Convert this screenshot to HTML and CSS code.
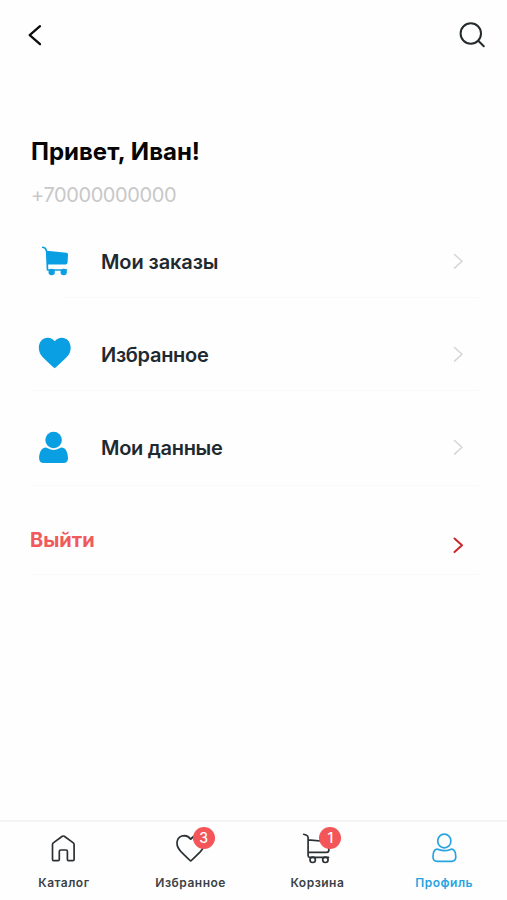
FILE: index.html
```html
<!DOCTYPE html>
<html lang="ru">
<head>
<meta charset="utf-8">
<meta name="viewport" content="width=device-width, initial-scale=1">
<title>Профиль</title>
<link rel="stylesheet" href="styles.css">
</head>
<body>
<div class="app">
  <header class="topbar">
    <svg class="topbar-icon" viewBox="0 0 30 30"><path d="M20 6.200 9.700 15.200l10.300 9"/></svg>
    <svg class="topbar-icon search" viewBox="0 0 30 30"><circle cx="13.800" cy="13.500" r="10.200"/><path d="m21.300 20.700 5.500 5.500"/></svg>
  </header>
  <main class="content">
    <h1 class="greeting">Привет, Иван!</h1>
    <p class="phone">+70000000000</p>
    <nav class="menu">
      <a class="row row-orders">
        <svg class="row-icon" viewBox="0 0 36 36"><path d="M6.800 4.300 9.300 5.200 10.700 8.500 11.500 27h19" fill="none" stroke="#0a9fe3" stroke-width="1.700" stroke-linecap="round" stroke-linejoin="round"/><path d="M10.600 7.800 30.500 9.700Q32 10 32 11.500L31.500 19.500Q31.300 21.400 29.500 21.400H11.300Z"/><circle cx="15.700" cy="29" r="3.200"/><circle cx="27.700" cy="29" r="3.200"/></svg>
        <span class="row-label">Мои заказы</span>
        <svg class="chevron" viewBox="0 0 16 20"><path d="m4.500 3.500 7.500 6.800-7.500 6.800"/></svg>
      </a>
      <a class="row row-favorites">
        <svg class="row-icon" viewBox="0 0 36 36"><path d="M18.700 32.300Q17.600 31.800 7 21.500C-.2 14.400 2.200 1.800 12 1.700Q16 1.800 18.700 5.300 21.600 1.800 25.800 1.700C35 1.900 37.700 14.100 30.800 21.100Q19.900 31.700 18.700 32.300Z"/></svg>
        <span class="row-label">Избранное</span>
        <svg class="chevron" viewBox="0 0 16 20"><path d="m4.500 3.500 7.500 6.800-7.500 6.800"/></svg>
      </a>
      <a class="row row-data">
        <svg class="row-icon" viewBox="0 0 36 36"><circle cx="17.600" cy="11" r="8.300"/><path d="M8.500 18.700Q10.100 18.300 11.700 19.200 17.600 22.800 23.500 19.200 25.100 18.300 26.800 18.700C30.400 19.500 32 24.700 32 29.300Q32 34 27.500 34H7.700Q3.100 34 3.100 29.300C3.100 24.600 4.900 19.600 8.500 18.700Z"/></svg>
        <span class="row-label">Мои данные</span>
        <svg class="chevron" viewBox="0 0 16 20"><path d="m4.500 3.500 7.500 6.800-7.500 6.800"/></svg>
      </a>
      <a class="row row-logout">
        <span class="row-label">Выйти</span>
        <svg class="chevron" viewBox="0 0 16 20"><path d="m4.500 3.500 7.500 6.800-7.500 6.800"/></svg>
      </a>
    </nav>
  </main>
  <nav class="tabbar">
    <a class="tab">
      <span class="tab-icon"><svg viewBox="0 0 32 32"><path d="M5.500 12.500Q5.500 11.500 6.300 10.900L15.300 4.300Q16.300 3.700 17.300 4.300L26.300 10.900Q27.100 11.500 27.100 12.500V27.500Q27.100 28.700 25.900 28.700H21.600Q20.400 28.700 20.400 27.500V19.400Q20.400 18 19 18H13.700Q12.300 18 12.300 19.400V27.500Q12.300 28.700 11.100 28.700H6.700Q5.500 28.700 5.500 27.500Z"/></svg></span>
      <span class="tab-label">Каталог</span>
    </a>
    <a class="tab">
      <span class="tab-icon"><svg viewBox="0 0 32 32"><path d="M16.700 29Q15.600 28.300 7.200 19.900C.2 12.500 2.500 4 10.500 3.700Q14.300 3.900 16.700 7.200 19.200 3.900 23 3.700C31 4 33.200 12.500 26.200 19.900Q17.800 28.300 16.700 29Z"/></svg><b class="badge">3</b></span>
      <span class="tab-label">Избранное</span>
    </a>
    <a class="tab">
      <span class="tab-icon"><svg viewBox="0 0 32 32"><path d="M2.700 2.300 5.600 3.200Q7 3.800 7.100 5.500V23.700Q7.200 25.300 8.800 25.300H27.500M7.200 7.800 25.200 9.500Q27.800 9.800 27.800 12V18.300Q27.800 20.300 25.800 20.300H7.200"/><circle cx="11.700" cy="27.800" r="2.700"/><circle cx="24.400" cy="27.800" r="2.700"/></svg><b class="badge">1</b></span>
      <span class="tab-label">Корзина</span>
    </a>
    <a class="tab active">
      <span class="tab-icon"><svg viewBox="0 0 32 32"><rect x="9.800" y="2.200" width="13" height="13.600" rx="6.400"/><path d="M9 17.200C10.500 17.100 12 18.700 16.400 18.700S22.100 17.100 23.700 17.200C26.500 17.500 27.800 21.500 27.800 25.100Q27.800 29.300 23.600 29.300H9.200Q5 29.300 5 25.100C5 21.500 6.200 17.500 9 17.200Z"/></svg></span>
      <span class="tab-label">Профиль</span>
    </a>
  </nav>
</div>
</body>
</html>
```

FILE: styles.css
```css
* { box-sizing: border-box; }

body {
  margin: 0;
  background: #fefefe;
  color: #1f2a30;
  font-family: Inter, "Liberation Sans", sans-serif;
}

.app {
  height: 900px;
  display: flex;
  flex-direction: column;
}

.topbar {
  height: 70px;
  padding: 20px 20px 0;
  display: flex;
  justify-content: space-between;
}

.topbar-icon {
  width: 30px;
  height: 30px;
  fill: none;
  stroke: #0d0d0d;
  stroke-width: 2.3;
  stroke-linecap: round;
  stroke-linejoin: round;
}

.search {
  stroke: #252a2d;
  stroke-width: 2;
}

.content {
  flex: 1;
  padding: 67px 29px 0 30px;
}

.greeting {
  margin: 0 0 0 1px;
  font-size: 24px;
  line-height: 30px;
  font-weight: 700;
  color: #050505;
  white-space: nowrap;
}

.phone {
  margin: 13px 0 0 1px;
  font-size: 20px;
  line-height: 30px;
  letter-spacing: -0.4px;
  color: #c8c8c8;
}

.menu {
  margin-top: 15px;
}

.row {
  display: flex;
  align-items: flex-start;
  border-bottom: 1px solid #f9f9f9;
}

.row-orders {
  height: 73px;
  padding-top: 18px;
  border-image: linear-gradient(90deg, transparent 35px, #f9f9f9 35px) 1;
}

.row-favorites {
  height: 93px;
  padding-top: 38px;
}

.row-data {
  height: 95px;
  padding-top: 38px;
}

.row-logout {
  height: 89px;
  padding-top: 35px;
}

.row-icon {
  width: 36px;
  height: 36px;
  margin-left: 6px;
  margin-right: 29px;
  fill: #0a9fe3;
}

.row-label {
  margin-top: 1px;
  font-size: 20px;
  line-height: 36px;
  font-weight: 600;
  letter-spacing: -0.3px;
}

.row-orders .row-label { letter-spacing: -0.1px; }

.chevron {
  width: 16px;
  height: 20px;
  margin: 8px 12px 0 auto;
  fill: none;
  stroke: #d5d5d5;
  stroke-width: 1.5;
  stroke-linecap: round;
  stroke-linejoin: round;
}

.row-logout .row-label {
  color: #f15a5c;
  font-weight: 650;
  letter-spacing: 0;
}

.row-logout .chevron {
  margin-top: 14px;
  stroke: #c9272d;
  stroke-width: 2;
}

.tabbar {
  height: 80px;
  border-top: 2px solid #f3f4f4;
  display: grid;
  grid-template-columns: repeat(4, 1fr);
}

.tab {
  display: flex;
  flex-direction: column;
  align-items: center;
  padding-top: 10px;
}

.tab-icon {
  position: relative;
  width: 32px;
  height: 32px;
}

.tab-icon svg {
  display: block;
  width: 32px;
  height: 32px;
  fill: none;
  stroke: #2b3135;
  stroke-width: 1.7;
  stroke-linecap: round;
  stroke-linejoin: round;
}

.badge {
  position: absolute;
  top: -5px;
  left: 18.5px;
  width: 22px;
  height: 22px;
  border-radius: 50%;
  background: #f45558;
  color: #fff;
  font-size: 14px;
  line-height: 22px;
  font-weight: 500;
  text-align: center;
}

.tab-label {
  margin-top: 10px;
  padding-left: 1px;
  font-size: 12px;
  line-height: 17px;
  font-weight: 600;
  letter-spacing: 0.5px;
  color: #3a4248;
}

.active svg { stroke: #27a3e2; }
.active .tab-label { color: #27a3e2; }
```
